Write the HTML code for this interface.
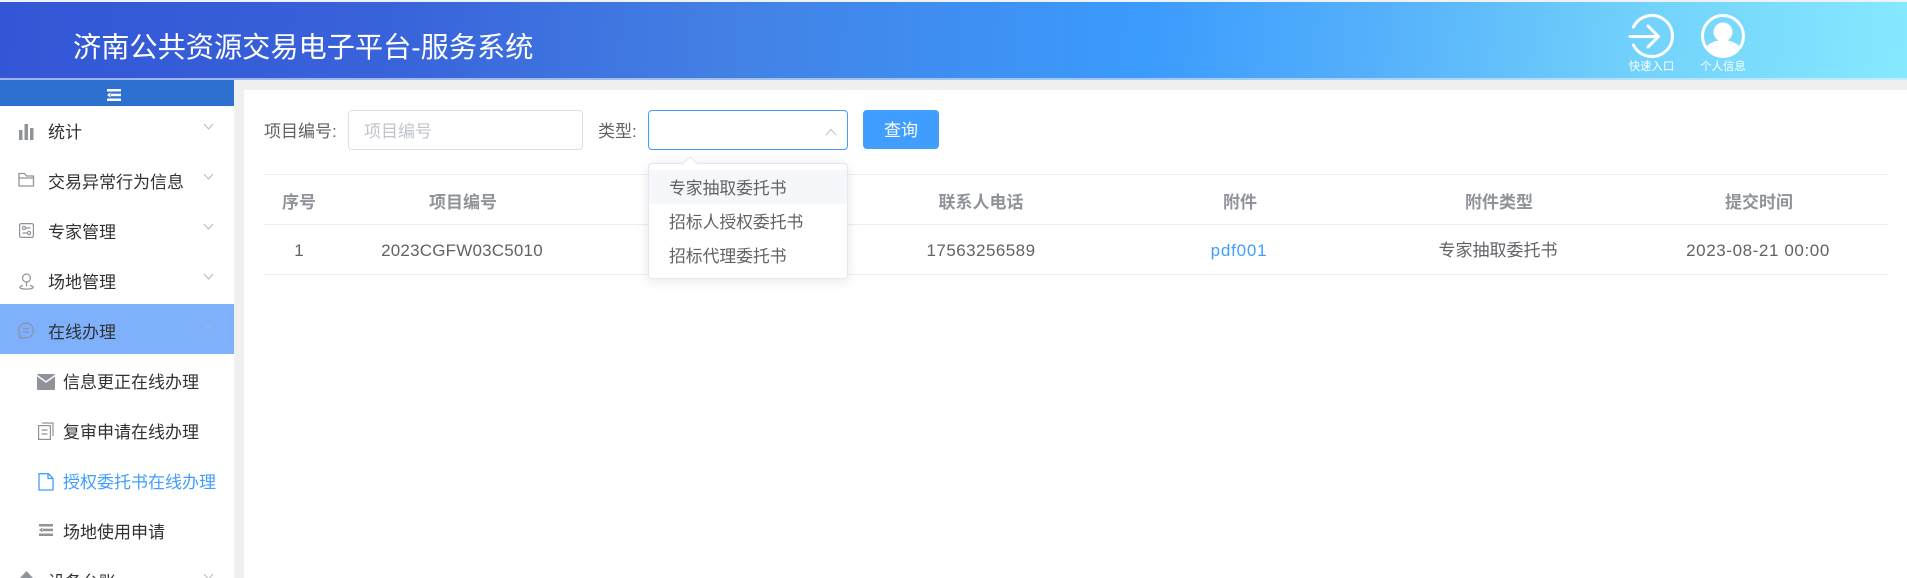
<!DOCTYPE html>
<html lang="zh-CN">
<head>
<meta charset="utf-8">
<title>济南公共资源交易电子平台-服务系统</title>
<style>
html,body{margin:0;padding:0;width:1907px;height:578px;overflow:hidden;background:#f0f0f0;}
body{position:relative;font-family:"Liberation Sans","Noto Sans CJK SC",sans-serif;font-size:17px;color:#606266;}
.a{position:absolute;white-space:nowrap;}
.c{transform:translateX(-50%);}
#top{position:absolute;left:0;top:0;width:1907px;height:2px;background:#eef3fb;}
#hd{position:absolute;left:0;top:2px;width:1907px;height:76px;background:linear-gradient(95deg,#3356d6 0%,#3862da 20%,#4380e4 38%,#3b9bfd 60%,#55b0fb 72%,#72d2fb 86%,#86e9ff 100%);}
#hl{position:absolute;left:0;top:78px;width:1907px;height:2px;background:linear-gradient(90deg,#9db3ea,#a0c8f5 60%,#bdf0ff);}
#side{position:absolute;left:0;top:80px;width:234px;height:498px;background:#fff;overflow:hidden;}
#bar{position:absolute;left:0;top:0;width:234px;height:26px;background:#2e70cf;}
#main{position:absolute;left:244px;top:90px;width:1663px;height:488px;background:#fff;}
.m{color:#303133;line-height:24px;height:24px;}
.s{color:#303133;line-height:24px;height:24px;}
.th{font-weight:bold;color:#909399;font-size:17px;line-height:24px;top:191px;}
.td{color:#606266;line-height:24px;top:238.5px;}
.line{position:absolute;left:264px;width:1624px;height:1px;background:#ebeef5;}
#pop{position:absolute;left:648px;top:163px;width:198px;height:114px;background:#fff;border:1px solid #e4e7ed;border-radius:4px;box-shadow:0 2px 12px rgba(0,0,0,.1);}
.opt{position:absolute;left:0;width:198px;height:34px;line-height:38px;padding-left:20px;box-sizing:border-box;color:#606266;font-size:16.8px;}
svg{position:absolute;overflow:visible;}
</style>
</head>
<body>
<div id="top"></div>
<div id="hd"></div>
<div id="hl"></div>
<div class="a" style="left:73px;top:27px;font-size:28.2px;line-height:40px;color:#fff;">济南公共资源交易电子平台-服务系统</div>

<svg style="left:1630px;top:14px" width="44" height="44" viewBox="0 0 44 44" fill="none" stroke="#fff" stroke-width="3" stroke-linecap="round" stroke-linejoin="round">
  <path d="M3.500 13A20.500 20.500 0 1 1 3.500 31"/>
  <path d="M0 22.500H27M18 12l10.500 10.500L18 33"/>
</svg>
<div class="a c" style="left:1651.500px;top:59px;font-size:11.400px;line-height:16px;color:#fff;">快速入口</div>

<svg style="left:1701px;top:14px" width="44" height="44" viewBox="0 0 44 44">
  <defs><clipPath id="cp"><circle cx="22" cy="22" r="20"/></clipPath></defs>
  <circle cx="22" cy="22" r="20.500" fill="none" stroke="#fff" stroke-width="3"/>
  <circle cx="22" cy="18" r="9.500" fill="#fff"/>
  <ellipse cx="22" cy="39" rx="19" ry="13" fill="#fff" clip-path="url(#cp)"/>
</svg>
<div class="a c" style="left:1723px;top:59px;font-size:11.400px;line-height:16px;color:#fff;">个人信息</div>

<div id="side">
  <div id="bar">
    <svg style="left:107px;top:9px" width="14" height="12" viewBox="0 0 14 12" fill="#fff"><rect x="0" y="0" width="14" height="2.500"/><rect x="4" y="4.700" width="10" height="2.500"/><rect x="0" y="9.500" width="14" height="2.500"/><path d="M3.500 3.500v5L0 6z"/></svg>
  </div>

  <svg style="left:19px;top:44px" width="15" height="16" fill="#909399"><rect x="0" y="6" width="3.500" height="10"/><rect x="5.500" y="0" width="3.500" height="16"/><rect x="11" y="4" width="3.500" height="12"/></svg>
  <div class="a m" style="left:48px;top:41px;">统计</div>
  <svg style="left:203px;top:43px" width="11" height="7" fill="none" stroke="#b4b7bd" stroke-width="1"><path d="M1 1l4.500 5L10 1"/></svg>

  <svg style="left:18px;top:92px" width="17" height="15" fill="none" stroke="#909399" stroke-width="1.300"><path d="M1 14V1.500h5.500L8.500 4H15.500V14zM1 6H15.500"/></svg>
  <div class="a m" style="left:48px;top:91px;">交易异常行为信息</div>
  <svg style="left:203px;top:93px" width="11" height="7" fill="none" stroke="#b4b7bd" stroke-width="1"><path d="M1 1l4.500 5L10 1"/></svg>

  <svg style="left:19px;top:143px" width="15" height="15" fill="none" stroke="#909399" stroke-width="1.200"><rect x=".6" y=".6" width="13.800" height="13.800" rx="1.500"/><circle cx="5" cy="5" r="1.600"/><circle cx="10" cy="10" r="1.600"/><path d="M7 5h4.500M3.500 10h4.500"/></svg>
  <div class="a m" style="left:48px;top:141px;">专家管理</div>
  <svg style="left:203px;top:143px" width="11" height="7" fill="none" stroke="#b4b7bd" stroke-width="1"><path d="M1 1l4.500 5L10 1"/></svg>

  <svg style="left:19px;top:193px" width="15" height="17" fill="none" stroke="#909399" stroke-width="1.200"><circle cx="7.500" cy="5" r="4"/><path d="M7.500 9v4.500M4 12.500C1.500 13 .8 13.800 .8 14.300c0 1 3 1.800 6.700 1.800s6.700-.8 6.700-1.800c0-.5-.8-1.300-3.200-1.800"/></svg>
  <div class="a m" style="left:48px;top:191px;">场地管理</div>
  <svg style="left:203px;top:193px" width="11" height="7" fill="none" stroke="#b4b7bd" stroke-width="1"><path d="M1 1l4.500 5L10 1"/></svg>

  <div style="position:absolute;left:0;top:224px;width:234px;height:50px;background:#7fb0fb;"></div>
  <svg style="left:18px;top:242px" width="16" height="17" fill="none" stroke="#8a95a8" stroke-width="1.300"><path d="M2.500 14.500C1.300 13 .7 11 .7 8.500A7.300 7.300 0 1 1 8 15.800H1.500z"/><path d="M5 6.500h6M5 10h6"/></svg>
  <div class="a m" style="left:48px;top:241px;">在线办理</div>
  <svg style="left:203px;top:244px" width="11" height="7" fill="none" stroke="#9cb5dc" stroke-width="1"><path d="M1 6l4.500-5L10 6"/></svg>

  <svg style="left:37px;top:294px" width="18" height="16"><rect x="0" y="0" width="18" height="16" rx="1" fill="#909399"/><path d="M0 1.500l9 6.500 9-6.500" fill="none" stroke="#fff" stroke-width="1.400"/></svg>
  <div class="a s" style="left:63px;top:291px;">信息更正在线办理</div>

  <svg style="left:38px;top:342px" width="16" height="18" fill="none" stroke="#909399" stroke-width="1.200"><rect x=".6" y="3.600" width="11.800" height="13.800" fill="#fff"/><path d="M4 1h11v13M3.500 8h6M3.500 12h6"/></svg>
  <div class="a s" style="left:63px;top:341px;">复审申请在线办理</div>

  <svg style="left:38px;top:393px" width="16" height="18" fill="none" stroke="#409eff" stroke-width="1.300"><path d="M1 .7h9.500L15 5.500V17H1zM10 .7V5.500h5"/></svg>
  <div class="a s" style="left:63px;top:391px;color:#409eff;">授权委托书在线办理</div>

  <svg style="left:39px;top:444px" width="14" height="12" fill="#909399"><rect x="0" y="0" width="14" height="2.500"/><rect x="4" y="4.700" width="10" height="2.500"/><rect x="0" y="9.500" width="14" height="2.500"/><path d="M3.500 3.500v5L0 6z"/></svg>
  <div class="a s" style="left:63px;top:441px;">场地使用申请</div>

  <svg style="left:19px;top:490px" width="15" height="14" fill="#909399"><path d="M7.500 1L14 8H1z"/><rect x="3" y="8" width="9" height="6"/></svg>
  <div class="a m" style="left:48px;top:491px;">设备台账</div>
  <svg style="left:203px;top:493px" width="11" height="7" fill="none" stroke="#b4b7bd" stroke-width="1"><path d="M1 1l4.500 5L10 1"/></svg>
</div>

<div id="main"></div>

<div class="a" style="left:264px;top:120px;line-height:24px;font-size:17px;">项目编号:</div>
<div style="position:absolute;left:348px;top:110px;width:235px;height:40px;box-sizing:border-box;border:1px solid #dcdfe6;border-radius:4px;background:#fff;"></div>
<div class="a" style="left:364px;top:120px;line-height:24px;font-size:17px;color:#c0c4cc;">项目编号</div>

<div class="a" style="left:598px;top:120px;line-height:24px;font-size:17px;">类型:</div>
<div style="position:absolute;left:648px;top:110px;width:200px;height:40px;box-sizing:border-box;border:1px solid #409eff;border-radius:4px;background:#fff;"></div>
<svg style="left:825px;top:128px" width="12" height="8" fill="none" stroke="#c0c4cc" stroke-width="1.100"><path d="M1 7l5-5.500L11 7"/></svg>

<div style="position:absolute;left:863px;top:110px;width:76px;height:39px;background:#409eff;border-radius:4px;"></div>
<div class="a c" style="left:901px;top:119px;line-height:24px;color:#fff;">查询</div>

<div class="line" style="top:174px"></div>
<div class="line" style="top:224px"></div>
<div class="line" style="top:274px"></div>

<div class="a c th" style="left:299px;">序号</div>
<div class="a c th" style="left:463px;">项目编号</div>
<div class="a c th" style="left:981px;">联系人电话</div>
<div class="a c th" style="left:1240px;">附件</div>
<div class="a c th" style="left:1499px;">附件类型</div>
<div class="a c th" style="left:1759px;">提交时间</div>

<div class="a c td" style="left:299px;">1</div>
<div class="a c td" style="left:462px;letter-spacing:.2px;">2023CGFW03C5010</div>
<div class="a c td" style="left:981px;letter-spacing:.45px;">17563256589</div>
<div class="a c td" style="left:1239px;color:#409eff;letter-spacing:.8px;">pdf001</div>
<div class="a c td" style="left:1498px;">专家抽取委托书</div>
<div class="a c td" style="left:1758px;letter-spacing:.6px;">2023-08-21 00:00</div>

<div id="pop">
  <div class="opt" style="top:6px;background:#f5f7fa;">专家抽取委托书</div>
  <div class="opt" style="top:40px;">招标人授权委托书</div>
  <div class="opt" style="top:74px;">招标代理委托书</div>
</div>
<svg style="left:682px;top:157px" width="16" height="7"><path d="M0 7L8 0l8 7z" fill="#fff" stroke="#e4e7ed" stroke-width="1"/><rect x="1" y="6.500" width="14" height="2" fill="#fff"/></svg>
</body>
</html>
